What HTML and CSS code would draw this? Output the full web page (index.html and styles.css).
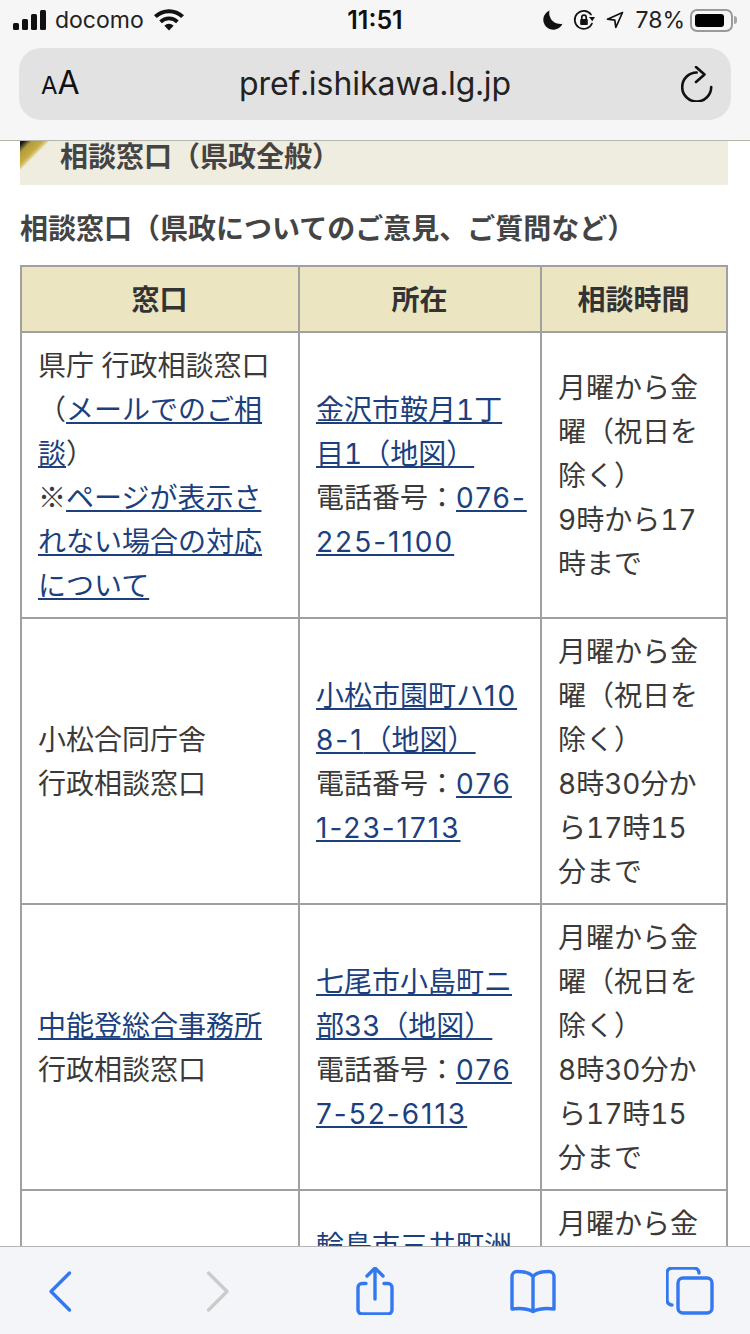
FILE: index.html
```html
<!DOCTYPE html>
<html lang="ja">
<head>
<meta charset="utf-8">
<title>相談窓口</title>
<link rel="stylesheet" href="styles.css">
</head>
<body>
<main class="page">
  <h2 class="band">相談窓口（県政全般）</h2>
  <h3 class="sub">相談窓口（県政についてのご意見、ご質問など）</h3>
  <table class="desk">
    <colgroup><col class="c1"><col class="c2"><col class="c3"></colgroup>
    <thead><tr><th>窓口</th><th>所在</th><th>相談時間</th></tr></thead>
    <tbody>
      <tr>
        <td>県庁 行政相談窓口<br>（<a href="#">メールでのご相談</a>）<br><span class="cjk">※</span><a href="#">ページが表示されない場合の対応について</a></td>
        <td class="addr"><a href="#">金沢市鞍月1丁目1（地図）</a><br>電話番号：<a class="tel" href="#">076-225-1100</a></td>
        <td>月曜から金曜（祝日を除く）<br>9時から17時まで</td>
      </tr>
      <tr>
        <td>小松合同庁舎<br>行政相談窓口</td>
        <td class="addr"><a href="#">小松市園町ハ<span class="tel">108-1</span>（地図）</a><br>電話番号：<a class="tel" href="#">076<br>1-23-1713</a></td>
        <td>月曜から金曜（祝日を除く）<br>8時30分から17時15分まで</td>
      </tr>
      <tr>
        <td><a href="#">中能登総合事務所</a><br>行政相談窓口</td>
        <td class="addr"><a href="#">七尾市小島町ニ部33（地図）</a><br>電話番号：<a class="tel" href="#">0767-52-6113</a></td>
        <td>月曜から金曜（祝日を除く）<br>8時30分から17時15分まで</td>
      </tr>
      <tr>
        <td>奥能登総合事務所<br>行政相談窓口</td>
        <td class="addr"><a href="#">輪島市三井町洲衛10部11番地1（地図）</a><br>電話番号：<a class="tel" href="#">0768-26-2300</a></td>
        <td>月曜から金曜（祝日を除く）<br>8時30分から17時15分まで</td>
      </tr>
    </tbody>
  </table>
</main>

<header class="topbar">
  <div class="status">
    <div class="st-left">
      <svg class="i-signal" viewBox="0 0 34 20"><rect x="0" y="13" width="6" height="7" rx="1.500"/><rect x="9" y="9" width="6" height="11" rx="1.500"/><rect x="18" y="4" width="6" height="16" rx="1.500"/><rect x="27" y="0" width="6" height="20" rx="1.500"/></svg>
      <span class="carrier">docomo</span>
      <svg class="i-wifi" viewBox="0 0 30 22"><path d="M15 21.500l-4.600-4.800a6.600 6.600 0 0 1 9.200 0z"/><path d="M7.900 14.200l-2.600-2.700a14 14 0 0 1 19.400 0l-2.600 2.700a10.300 10.300 0 0 0-14.200 0z"/><path d="M2.800 9L0 6.200a21.700 21.700 0 0 1 30 0L27.200 9a17.800 17.800 0 0 0-24.400 0z"/></svg>
    </div>
    <span class="clock">11:51</span>
    <div class="st-right">
      <svg class="i-moon" viewBox="0 0 20 20"><path d="M6.500 0.500a10 10 0 1 0 13 13.200A11 11 0 0 1 6.500 .5z"/></svg>
      <svg class="i-lock" viewBox="0 0 22 22"><path class="ln hair" d="M19 14.500A9 9 0 1 1 18 5.500"/><path d="M22 8l-6 0 3.300 4.200z"/><rect x="7.200" y="10" width="7.600" height="6" rx="1"/><path class="ln hair" d="M8.800 10V8.300a2.200 2.200 0 0 1 4.400 0V10"/></svg>
      <svg class="i-loc" viewBox="0 0 18 18"><path class="ln hair" d="M16.500 1.500L1.500 8.200l7.300.9 1 7.400z"/></svg>
      <span class="pct">78%</span>
      <span class="battery"><span class="level"></span></span>
      <span class="nub"></span>
    </div>
  </div>
  <div class="urlbar">
    <span class="aa"><small>A</small>A</span>
    <span class="url">pref.ishikawa.lg.jp</span>
    <svg class="i-reload" viewBox="0 0 32 36"><path class="ln" d="M15.700 6.500A14.500 14.500 0 1 0 30.200 21"/><path class="ln" d="M15 1l8.500 7.500-8.500 7.500"/></svg>
  </div>
</header>

<footer class="toolbar">
  <svg class="tool" viewBox="0 0 48 48"><path class="ln" d="M33.500 6L15 24.500 33.500 43"/></svg>
  <svg class="tool" viewBox="0 0 48 48"><path class="ln off" d="M14.500 6L33 24.500 14.500 43"/></svg>
  <svg class="tool" viewBox="0 0 48 48"><path class="ln" d="M15 16.500h-4a4 4 0 0 0-4 4V43a4 4 0 0 0 4 4h26a4 4 0 0 0 4-4V20.500a4 4 0 0 0-4-4h-4M24 32V1.500M16 9l8-8 8 8"/></svg>
  <svg class="tool" viewBox="0 0 48 48"><path class="ln" d="M24 9.500C21 5.500 16 4.500 8 4.500a5 5 0 0 0-5 5V42c8-1 15-.5 21 2.500 6-3 13-3.500 21-2.500V9.500a5 5 0 0 0-5-5c-8 0-13 1-16 5zV44"/></svg>
  <svg class="tool" viewBox="0 0 48 48"><path class="ln" d="M6 38a5 5 0 0 1-5-5V6a5 5 0 0 1 5-5h22a5 5 0 0 1 5 5"/><rect class="ln" x="12" y="11" width="34" height="35" rx="5"/></svg>
</footer>
</body>
</html>
```
FILE: styles.css
```css
html, body {
  margin: 0;
  padding: 0;
  height: 1334px;
  overflow: hidden;
  background: #fff;
}
body {
  position: relative;
  width: 750px;
  font-family: Inter, "Noto Sans CJK JP", sans-serif;
  font-size: 28px;
  line-height: 44px;
  color: #3a3a3a;
  font-variant-numeric: tabular-nums;
}
.cjk {
  font-family: "Noto Sans CJK JP", sans-serif;
  line-height: 1;
}
.page {
  padding: 120px 22px 0 20px;
}
.band {
  position: relative;
  margin: 0;
  height: 65px;
  box-sizing: border-box;
  padding: 15px 0 0 40px;
  background: #efeddf;
  font-size: 28px;
  line-height: 44px;
  font-weight: 700;
  color: #444;
}
.band::before {
  content: "";
  position: absolute;
  left: 0;
  top: 0;
  width: 50px;
  height: 50px;
  background: linear-gradient(135deg, #17171c 25%, #b09a3a 33%, #c8ac45 44%, #e4dcae 50%);
  clip-path: polygon(0 0, 100% 0, 0 100%);
}
.sub {
  margin: 22px 0 14px;
  font-size: 28px;
  line-height: 44px;
  font-weight: 700;
  color: #444;
  white-space: nowrap;
}
.desk {
  width: 706px;
  table-layout: fixed;
  border-collapse: collapse;
  border: 2px solid #a0a0a0;
}
.c1 { width: 278px; }
.c2 { width: 242px; }
.c3 { width: 186px; }
.desk th, .desk td {
  border: 2px solid #a0a0a0;
  padding: 11px 17px 9px 16px;
  line-height: 44px;
  vertical-align: middle;
  word-break: break-all;
}
.desk .addr {
  padding-right: 13px;
}
.desk th {
  background: #ebe5c1;
  font-weight: 700;
  text-align: center;
  color: #333;
}
.desk a {
  color: #1c3f7e;
  text-decoration: underline;
}
.tel {
  font-variant-numeric: normal;
  letter-spacing: 2px;
}

.topbar {
  position: absolute;
  left: 0;
  top: 0;
  width: 750px;
  height: 141px;
  box-sizing: border-box;
  background: #f6f6f7;
  border-bottom: 1px solid #b5b5ad;
  padding: 0 19px;
  font-family: Inter, "Liberation Sans", sans-serif;
  color: #111;
}
.status {
  display: grid;
  grid-template-columns: 1fr auto 1fr;
  align-items: center;
  height: 40px;
  margin: 0 -6px 8px -6px;
}
.st-left, .st-right {
  display: flex;
  align-items: center;
}
.st-right { justify-content: flex-end; }
.i-signal { width: 34px; height: 20px; fill: #111; }
.carrier { margin-left: 8px; font-size: 23px; line-height: 40px; color: #222; }
.i-wifi { width: 30px; height: 22px; margin-left: 10px; fill: #111; }
.clock { font-size: 25px; line-height: 40px; font-weight: 600; font-variant-numeric: normal; }
.i-moon { width: 20px; height: 20px; fill: #111; }
.i-lock { width: 22px; height: 22px; margin-left: 10px; fill: #111; }
.i-loc { width: 18px; height: 18px; margin-left: 11px; }
.pct { margin-left: 11px; font-size: 23px; line-height: 40px; color: #222; font-variant-numeric: normal; }
.battery {
  display: block;
  box-sizing: border-box;
  width: 43px;
  height: 23px;
  margin-left: 5px;
  padding: 3px;
  border: 2px solid #9a9a9a;
  border-radius: 7px;
}
.level {
  display: block;
  width: 29px;
  height: 13px;
  background: #000;
  border-radius: 3px;
}
.nub {
  display: block;
  width: 3px;
  height: 8px;
  margin: 0 0 0 1px;
  background: #a5a5a5;
  border-radius: 0 3px 3px 0;
}
.ln {
  fill: none;
  stroke: currentColor;
  stroke-width: 2.6;
  stroke-linecap: round;
  stroke-linejoin: round;
}
.hair { stroke-width: 1.7; }
.urlbar {
  display: grid;
  grid-template-columns: 1fr auto 1fr;
  align-items: center;
  height: 72px;
  padding: 0 18px;
  width: 712px;
  box-sizing: border-box;
  background: #e2e2e3;
  border-radius: 22px;
}
.aa { margin-left: 4px; font-size: 32px; line-height: 40px; color: #111; }
.aa small { font-size: 24px; }
.url { font-size: 32px; line-height: 44px; color: #222; letter-spacing: -0.05px; }
.i-reload { width: 32px; height: 36px; justify-self: end; color: #111; }

.toolbar {
  position: absolute;
  left: 0;
  top: 1246px;
  width: 750px;
  height: 88px;
  box-sizing: border-box;
  display: flex;
  justify-content: space-between;
  align-items: center;
  padding: 0 36px;
  background: #f4f5f8;
  border-top: 1px solid #b5b5b5;
}
.tool {
  width: 48px;
  height: 48px;
  color: #3478f0;
}
.tool .ln { stroke-width: 3.4; }
.tool .off { stroke: #cbcbcb; }
```
